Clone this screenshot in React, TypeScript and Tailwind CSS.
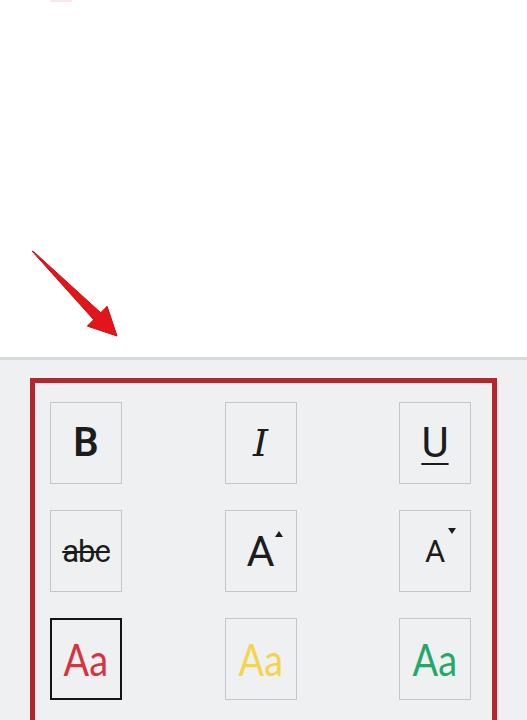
import type { ReactNode } from 'react'

function ToolButton({ children, selected = false }: { children: ReactNode; selected?: boolean }) {
  return (
    <div
      className={`relative flex h-[82px] w-[72px] items-center justify-center ${
        selected ? 'border-2 border-[#141414]' : 'border-[1.5px] border-[#c6c6c8]'
      }`}
    >
      {children}
    </div>
  )
}

function Arrow() {
  return (
    <svg className="absolute left-0 top-0" width="140" height="357" viewBox="0 0 140 357">
      <polygon
        points="32,251 34,252 100.7,312.7 107.1,306.3 117,336 87.3,326.1 93.7,319.7"
        fill="#e3141a"
        stroke="#c0141a"
        strokeWidth="1"
        strokeLinejoin="round"
      />
    </svg>
  )
}

export default function App() {
  return (
    <div className="h-[720px] w-[527px] overflow-hidden bg-white font-['Roboto','Liberation_Sans',sans-serif]">
      <div className="relative h-[357px] bg-white">
        <div className="absolute left-[50px] top-0 h-[2px] w-[22px] rounded-full bg-[#fbe7e8]" />
        <Arrow />
      </div>
      <div className="h-[3px] bg-[#dadadc]" />
      <div className="h-[360px] bg-[#eff0f2] pl-[30px] pr-[30px] pt-[18px]">
        <div className="flex h-[400px] w-[467px] flex-col gap-[26px] border-[5px] border-[#b5262c] pl-[15px] pr-[21px] pt-[19px]">
          <div className="flex justify-between">
            <ToolButton>
              <span className="text-[40px] font-semibold leading-none text-[#1c1c1c]">B</span>
            </ToolButton>
            <ToolButton>
              <span className="font-['DejaVu_Serif',serif] text-[38px] italic leading-none text-[#1c1c1c]">I</span>
            </ToolButton>
            <ToolButton>
              <span className="text-[42px] leading-none text-[#1c1c1c] underline decoration-[2px] underline-offset-[6px]">U</span>
            </ToolButton>
          </div>
          <div className="flex justify-between">
            <ToolButton>
              <span className="text-[31px] leading-none tracking-[-1px] text-[#1c1c1c] line-through decoration-[2px]">abc</span>
            </ToolButton>
            <ToolButton>
              <span className="text-[43px] leading-none text-[#1c1c1c]">A</span>
              <svg className="absolute left-[49px] top-[20px]" width="8" height="6" viewBox="0 0 8 6">
                <polygon points="4,0 8,6 0,6" fill="#1c1c1c" />
              </svg>
            </ToolButton>
            <ToolButton>
              <span className="text-[31px] leading-none text-[#1c1c1c]">A</span>
              <svg className="absolute left-[48px] top-[17px]" width="8" height="6" viewBox="0 0 8 6">
                <polygon points="0,0 8,0 4,6" fill="#1c1c1c" />
              </svg>
            </ToolButton>
          </div>
          <div className="flex justify-between">
            <ToolButton selected>
              <span className="scale-x-[0.86] font-['Lato',sans-serif] text-[44px] font-normal leading-none text-[#d8323f]">Aa</span>
            </ToolButton>
            <ToolButton>
              <span className="scale-x-[0.86] font-['Lato',sans-serif] text-[44px] font-normal leading-none text-[#f2d54c]">Aa</span>
            </ToolButton>
            <ToolButton>
              <span className="scale-x-[0.86] font-['Lato',sans-serif] text-[44px] font-normal leading-none text-[#23a86b]">Aa</span>
            </ToolButton>
          </div>
        </div>
      </div>
    </div>
  )
}
